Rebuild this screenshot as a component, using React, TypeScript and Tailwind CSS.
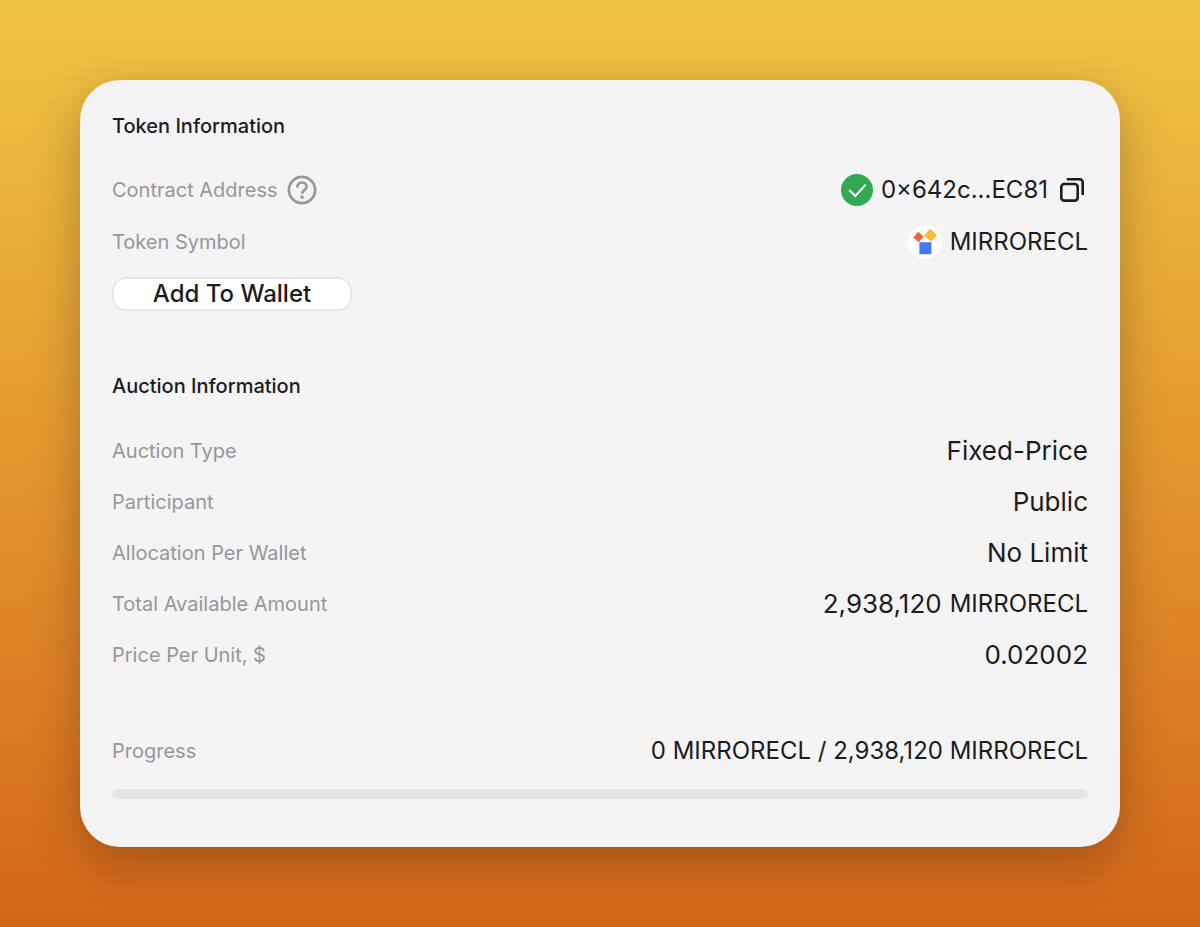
import { useId, type ReactNode } from 'react';

const auctionDetails = [
  { label: 'Auction Type', value: 'Fixed-Price' },
  { label: 'Participant', value: 'Public' },
  { label: 'Allocation Per Wallet', value: 'No Limit' },
  { label: 'Total Available Amount', value: '2,938,120', unit: 'MIRRORECL' },
  { label: 'Price Per Unit, $', value: '0.02002' },
];

function HelpIcon() {
  return (
    <svg viewBox="0 0 32 32" className="size-8" fill="none" aria-hidden="true">
      <circle cx="16" cy="16" r="13.1" stroke="currentColor" strokeWidth="2.7" />
      <path
        d="M11.3 13.4c0-2.9 1.9-4.9 4.7-4.9s4.6 1.8 4.6 4.2c0 3.4-4.5 3.4-4.5 7.1"
        stroke="currentColor"
        strokeWidth="2.7"
      />
      <rect x="14.6" y="21.6" width="3" height="3" fill="currentColor" />
    </svg>
  );
}

function VerifiedIcon() {
  return (
    <svg viewBox="0 0 32 32" className="size-8" fill="none" aria-hidden="true">
      <circle cx="16" cy="16" r="16" fill="#30a952" />
      <path d="M8.3 16l6 6L24.7 10.6" stroke="white" strokeWidth="2" />
    </svg>
  );
}

function CopyIcon() {
  return (
    <svg viewBox="0 0 24 24" className="size-6" fill="none" aria-hidden="true">
      <rect x="1.3" y="6" width="16.4" height="16.6" rx="3" stroke="currentColor" strokeWidth="2.6" />
      <path d="M6.8 1.3H19.7a3 3 0 0 1 3 3v12.6" stroke="currentColor" strokeWidth="2.6" />
    </svg>
  );
}

function TokenLogo() {
  return (
    <svg viewBox="0 0 34 34" className="size-[34px]" aria-hidden="true">
      <circle cx="17" cy="17" r="17" fill="white" />
      <path d="M5.2 12.4l5-5.6 5.6 4.6-5 5.8z" fill="#e56c34" />
      <path d="M16 10.6l6.2-6.8 6.8 6.1-5.8 6.9z" fill="#fbbb2d" />
      <rect x="11.4" y="17.2" width="12" height="12" fill="#4279fb" />
    </svg>
  );
}

function Row({ label, children }: { label: ReactNode; children: ReactNode }) {
  return (
    <div className="flex items-center justify-between gap-4">
      <dt className="flex items-center gap-2 text-xl text-[#97969d]">{label}</dt>
      <dd className="flex items-center gap-2 text-2xl">{children}</dd>
    </div>
  );
}

export default function App() {
  const progressId = useId();

  return (
    <div className="min-h-screen bg-linear-to-b from-[#efc544] to-[#d36518] p-20 font-['Inter',sans-serif] text-[#1c1c1e] [font-optical-sizing:none]">
      <main className="rounded-[40px] bg-[#f4f4f4] px-8 pt-8 pb-12 shadow-[0_14px_48px_rgba(0,0,0,0.25)]">
        <section>
          <h2 className="text-xl font-medium">Token Information</h2>
          <dl className="mt-[34px] flex flex-col gap-[19px]">
            <Row
              label={
                <>
                  Contract Address
                  <button type="button" aria-label="About the contract address">
                    <HelpIcon />
                  </button>
                </>
              }
            >
              <VerifiedIcon />
              0×642c...EC81
              <button type="button" aria-label="Copy address" className="px-1">
                <CopyIcon />
              </button>
            </Row>
            <Row label="Token Symbol">
              <TokenLogo />
              MIRRORECL
            </Row>
          </dl>
          <button
            type="button"
            className="mt-[18px] w-60 rounded-[14px] border-2 border-[#e8e8e8] bg-white text-2xl leading-[30px] font-medium"
          >
            Add To Wallet
          </button>
        </section>

        <section className="mt-[61px]">
          <h2 className="text-xl font-medium">Auction Information</h2>
          <dl className="mt-[35px] flex flex-col gap-[19px]">
            {auctionDetails.map(({ label, value, unit }) => (
              <Row key={label} label={label}>
                <span className="text-[26px] leading-8">{value}</span>
                {unit}
              </Row>
            ))}
          </dl>
        </section>

        <section className="mt-16">
          <div className="flex items-center justify-between gap-4">
            <label htmlFor={progressId} className="text-xl text-[#97969d]">
              Progress
            </label>
            <span className="text-2xl">0 MIRRORECL / 2,938,120 MIRRORECL</span>
          </div>
          <progress
            id={progressId}
            value={0}
            max={2938120}
            className="mt-[22px] block h-[10px] w-full appearance-none overflow-hidden rounded-full bg-[#e5e5e5] [&::-webkit-progress-bar]:bg-[#e5e5e5] [&::-webkit-progress-value]:bg-[#1c1c1e]"
          />
        </section>
      </main>
    </div>
  );
}
